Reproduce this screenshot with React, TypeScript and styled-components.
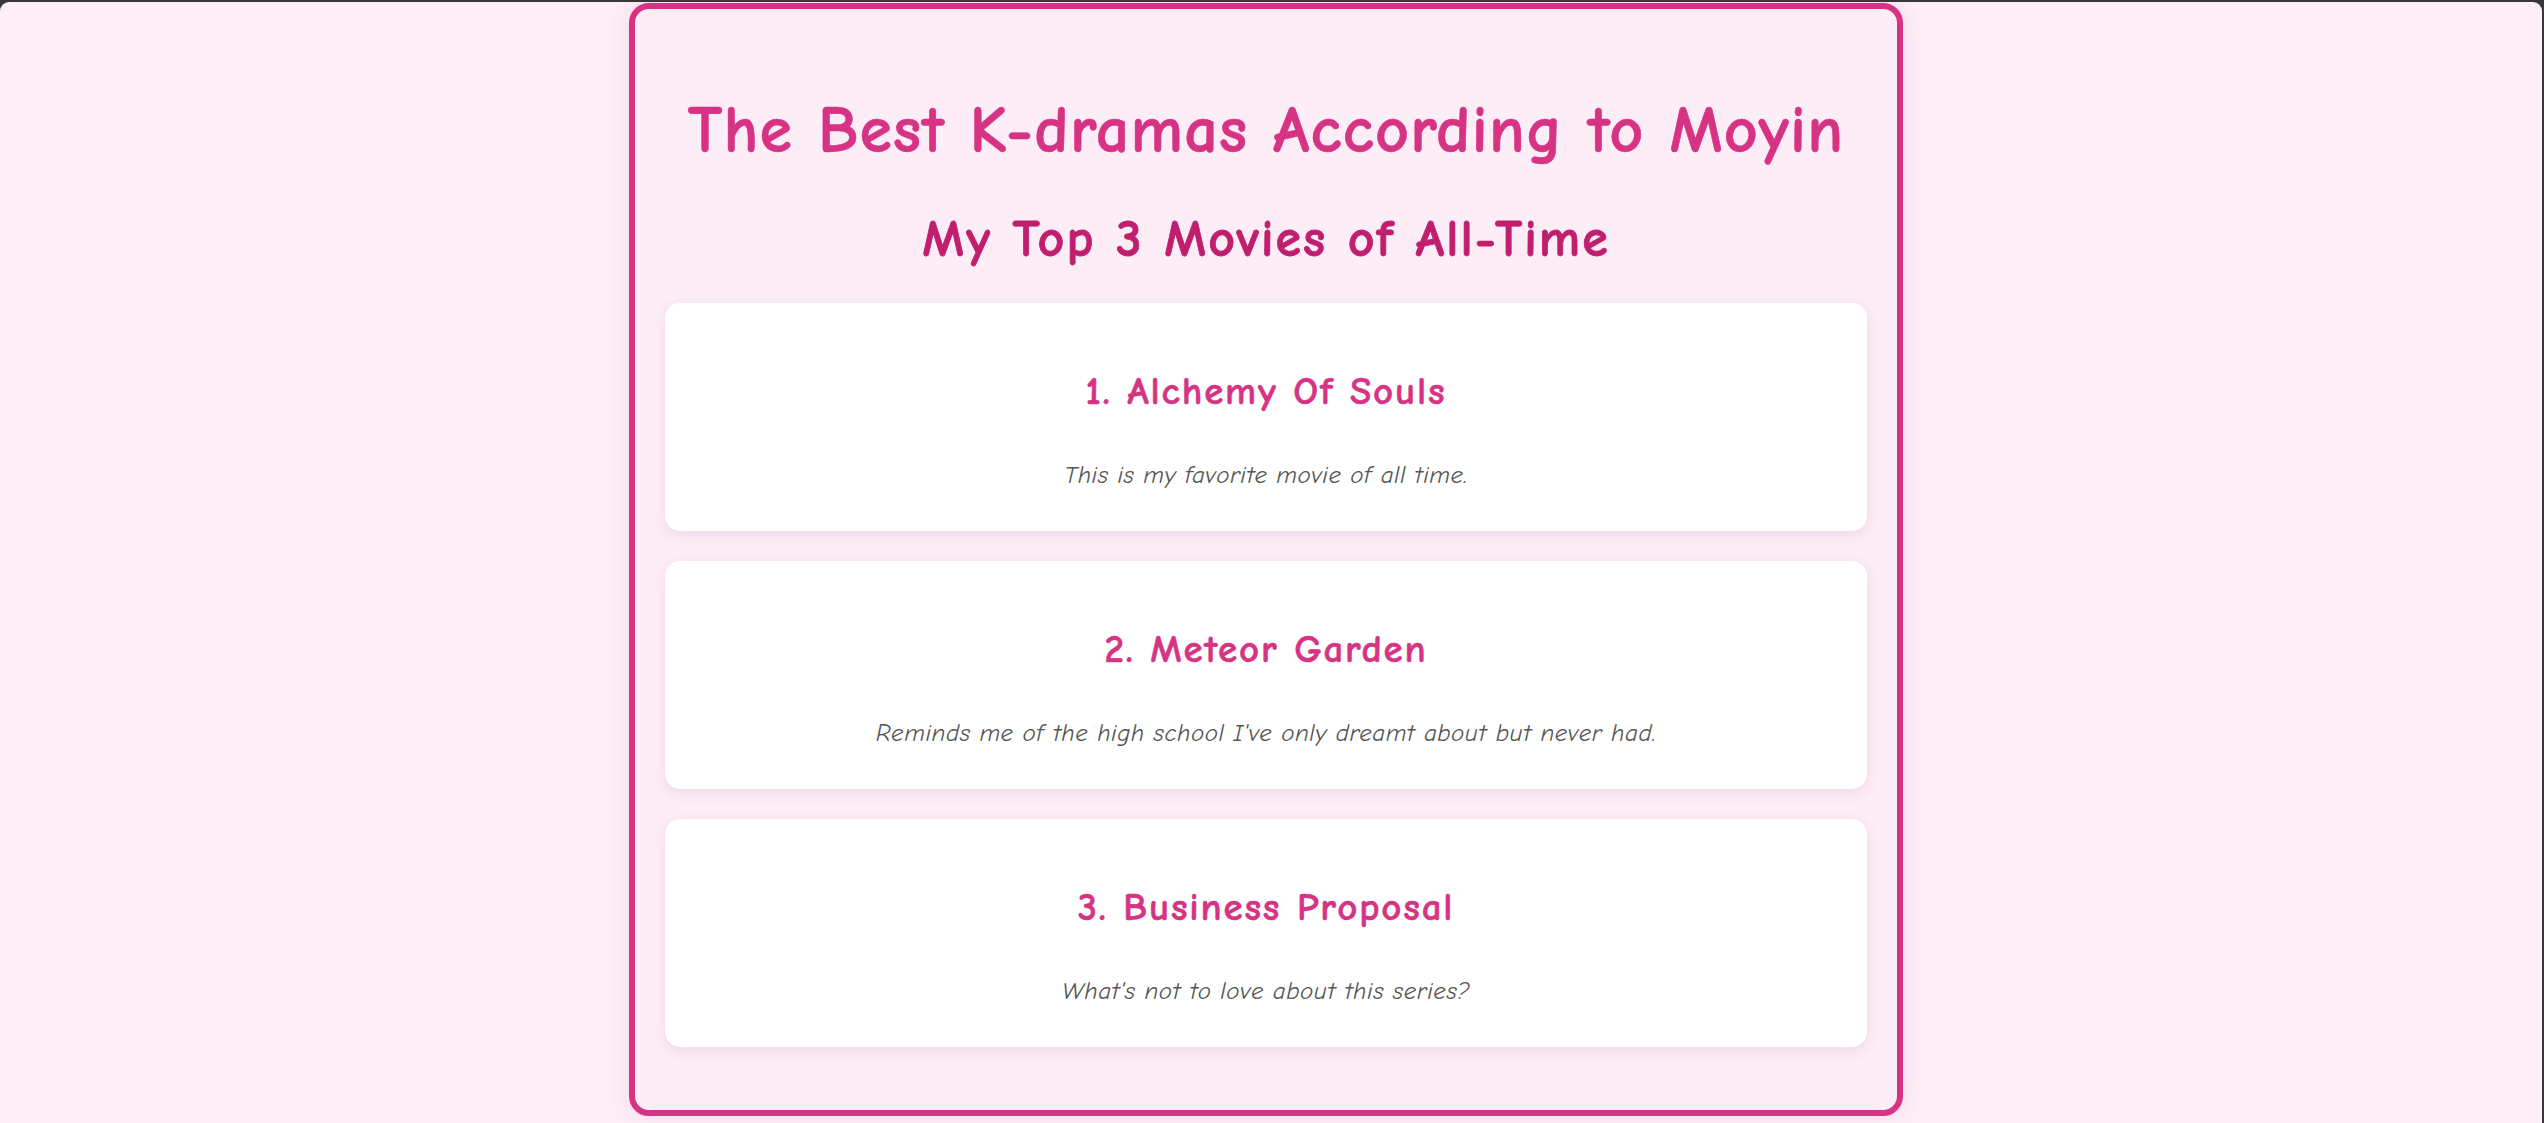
import React from "react";
import styled, { createGlobalStyle } from "styled-components";

const GlobalStyle = createGlobalStyle`
  html {
    background: #383838;
  }
  body {
    margin: 2px 2px 0 0;
    min-height: calc(100vh - 2px);
    background: #fdeef8;
    border-radius: 9px 9px 0 0;
    font-family: "Comic Sans MS", "Comic Neue", Lato, "Noto Sans", sans-serif;
  }
  * {
    box-sizing: border-box;
  }
`;

const Page = styled.main`
  display: flex;
  justify-content: center;
  padding: 1px 10px 0 0;
`;

const Panel = styled.section`
  width: 1274px;
  background: #fdedf7;
  border: 6px solid #d63384;
  border-radius: 20px;
  padding: 83px 30px 63px;
  box-shadow: 0 0 22px rgba(190, 70, 130, 0.12);
  display: flex;
  flex-direction: column;
  align-items: center;
`;

const Title = styled.h1`
  margin: 0;
  font-size: 66px;
  line-height: 1.2;
  font-weight: 700;
  letter-spacing: 1.2px;
  color: #d63384;
  text-align: center;
  -webkit-text-stroke: 0.6px #d63384;
`;

const Subtitle = styled.h2`
  margin: 37px 0 32px;
  font-size: 52px;
  line-height: 1.2;
  font-weight: 700;
  letter-spacing: 2px;
  color: #c01f6e;
  text-align: center;
  -webkit-text-stroke: 0.8px #c01f6e;
`;

const List = styled.ol`
  list-style: none;
  margin: 0;
  padding: 0;
  width: 100%;
  display: flex;
  flex-direction: column;
  gap: 30px;
`;

const Card = styled.li`
  background: #ffffff;
  border-radius: 15px;
  padding: 66px 20px 0;
  height: 228px;
  box-shadow: 0 4px 14px rgba(120, 40, 80, 0.1);
  display: flex;
  flex-direction: column;
  align-items: center;
`;

const CardTitle = styled.h3`
  margin: 0 0 45px;
  font-size: 39px;
  line-height: 1.2;
  font-weight: 700;
  letter-spacing: 1.8px;
  color: #d63384;
  -webkit-text-stroke: 0.5px #d63384;
`;

const CardText = styled.p`
  margin: 0;
  font-size: 25px;
  line-height: 1.2;
  font-style: italic;
  letter-spacing: 0.5px;
  color: #555555;
`;

const movies = [
  { rank: 1, title: "Alchemy Of Souls", note: "This is my favorite movie of all time." },
  { rank: 2, title: "Meteor Garden", note: "Reminds me of the high school I've only dreamt about but never had." },
  { rank: 3, title: "Business Proposal", note: "What's not to love about this series?" },
];

export default function App() {
  return (
    <>
      <GlobalStyle />
      <Page>
        <Panel>
          <Title>The Best K-dramas According to Moyin</Title>
          <Subtitle>My Top 3 Movies of All-Time</Subtitle>
          <List>
            {movies.map((m) => (
              <Card key={m.rank}>
                <CardTitle>
                  {m.rank}. {m.title}
                </CardTitle>
                <CardText>{m.note}</CardText>
              </Card>
            ))}
          </List>
        </Panel>
      </Page>
    </>
  );
}
